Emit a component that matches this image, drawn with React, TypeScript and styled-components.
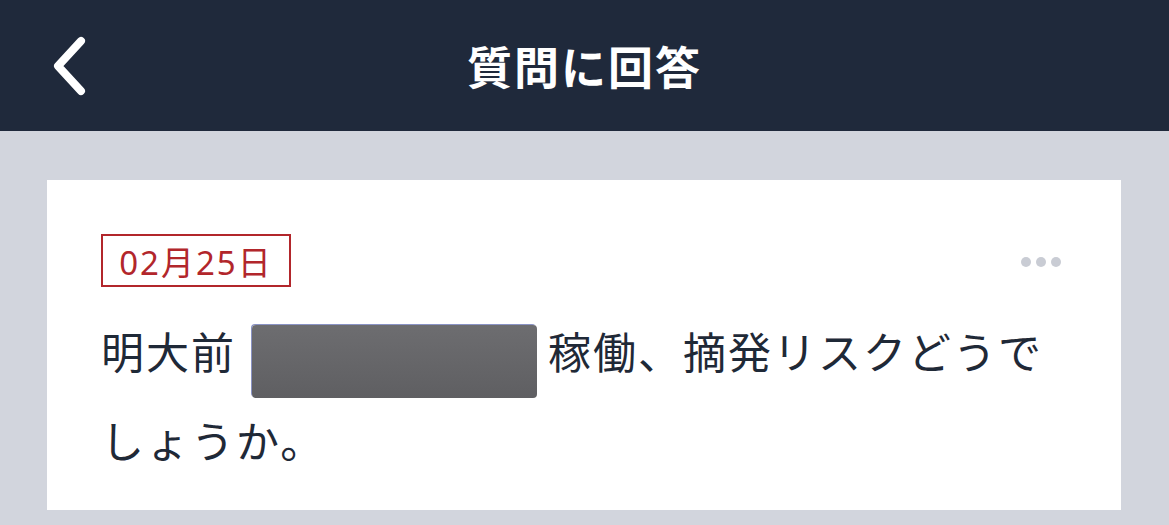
import React from "react";
import styled, { createGlobalStyle } from "styled-components";

const GlobalStyle = createGlobalStyle`
  html, body {
    margin: 0;
    padding: 0;
    background: #d2d5dd;
    font-family: "Noto Sans CJK JP", "Noto Sans", sans-serif;
  }
`;

const Page = styled.div`
  width: 1169px;
  height: 525px;
  background: #d2d5dd;
  overflow: hidden;
`;

const Header = styled.header`
  height: 131px;
  background: #1f293b;
  display: flex;
  align-items: center;
  justify-content: center;
  position: relative;
`;

const BackButton = styled.button`
  position: absolute;
  left: 44px;
  top: 30px;
  width: 52px;
  height: 74px;
  padding: 0;
  border: none;
  background: transparent;
  display: flex;
  align-items: center;
  justify-content: center;
`;

const Title = styled.h1`
  margin: 0;
  color: #ffffff;
  font-size: 45px;
  font-weight: 700;
  letter-spacing: 2px;
`;

const Main = styled.main`
  padding: 49px 48px 0 47px;
`;

const Card = styled.section`
  background: #ffffff;
  height: 330px;
  box-sizing: border-box;
  padding: 54px 60px 0 54px;
`;

const Meta = styled.div`
  display: flex;
  align-items: flex-start;
  justify-content: space-between;
`;

const DateBadge = styled.span`
  box-sizing: border-box;
  display: inline-flex;
  align-items: center;
  justify-content: center;
  height: 53px;
  width: 190px;
  border: 2px solid #b2262b;
  color: #b2262b;
  font-family: "Noto Sans", "Noto Sans CJK JP", sans-serif;
  font-size: 33px;
  letter-spacing: 2px;
`;

const Dots = styled.div`
  display: flex;
  gap: 5px;
  margin-top: 23px;
`;

const Dot = styled.span`
  width: 10px;
  height: 10px;
  border-radius: 50%;
  background: #c9ccd4;
`;

const Body = styled.p`
  margin: 22px 0 0;
  color: #1f2937;
  font-size: 43px;
  line-height: 82px;
  letter-spacing: 2px;
`;

const Redacted = styled.span`
  display: inline-block;
  vertical-align: middle;
  width: 285px;
  height: 73px;
  margin: 8px 11px 0 16px;
  background: linear-gradient(#6d6d70, #5f5f62);
  border-radius: 4px;
  box-shadow: -1px -1px 0 #8a93c4;
`;

const App: React.FC = () => {
  return (
    <>
      <GlobalStyle />
      <Page>
        <Header>
          <BackButton aria-label="back">
            <svg width="40" height="64" viewBox="0 0 40 64">
              <path
                d="M31 6 L8 31 L31 56"
                fill="none"
                stroke="#ffffff"
                strokeWidth="8"
                strokeLinecap="round"
                strokeLinejoin="round"
              />
            </svg>
          </BackButton>
          <Title>質問に回答</Title>
        </Header>
        <Main>
          <Card>
            <Meta>
              <DateBadge>02月25日</DateBadge>
              <Dots>
                <Dot />
                <Dot />
                <Dot />
              </Dots>
            </Meta>
            <Body>
              明大前
              <Redacted />
              稼働、摘発リスクどうで
              <br />
              しょうか。
            </Body>
          </Card>
        </Main>
      </Page>
    </>
  );
};

export default App;
